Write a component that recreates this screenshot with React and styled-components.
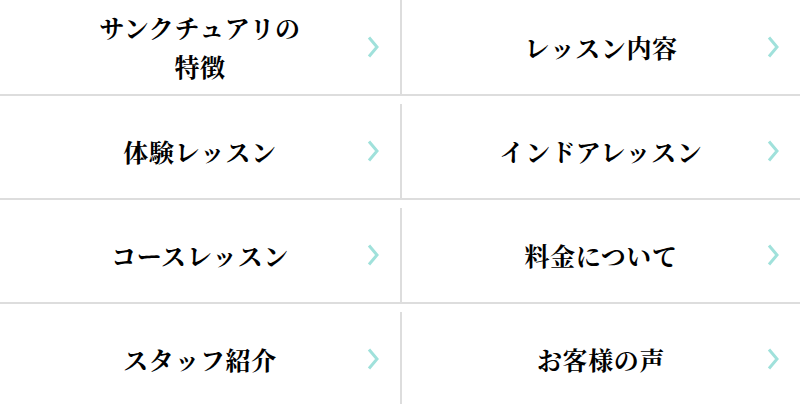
import React from "react";
import styled, { createGlobalStyle } from "styled-components";

const Global = createGlobalStyle`
  html, body { margin: 0; padding: 0; background: #fff; }
  body { overflow: hidden; }
`;

const Menu = styled.nav`
  width: 800px;
  display: flex;
  flex-direction: column;
`;

const Row = styled.div`
  display: grid;
  grid-template-columns: 400px 400px;
  border-bottom: 2px solid #dddddd;
  & + & { padding-top: 8px; }
`;

const Cell = styled.a`
  display: grid;
  grid-template-columns: 1fr auto 1fr;
  align-items: center;
  height: 94px;
  box-sizing: border-box;
  border-left: ${(p) => (p.$right ? "2px solid #dddddd" : "none")};
  text-decoration: none;
  color: #000;
`;

const Label = styled.span`
  grid-column: 2;
  text-align: center;
  font-family: "Noto Serif CJK JP", "Noto Serif JP", "Noto Sans CJK JP", serif;
  font-weight: 700;
  font-size: 25px;
  line-height: 39px;
  letter-spacing: 0.6px;
  color: #000;
`;

const Arrow = styled.svg`
  grid-column: 3;
  justify-self: end;
  margin-right: 21px;
  width: 12px;
  height: 22px;
`;

const Chevron = () => (
  <Arrow viewBox="0 0 12 22">
    <polyline points="2,1.5 10,11 2,20.5" fill="none" stroke="#a0e1db" strokeWidth="3" />
  </Arrow>
);

const rows = [
  [["サンクチュアリの", "特徴"], ["レッスン内容"]],
  [["体験レッスン"], ["インドアレッスン"]],
  [["コースレッスン"], ["料金について"]],
  [["スタッフ紹介"], ["お客様の声"]],
];

export default function App() {
  return (
    <>
      <Global />
      <Menu>
        {rows.map((r, i) => (
          <Row key={i}>
            {r.map((lines, j) => (
              <Cell key={j} href="#" $right={j === 1}>
                <Label>
                  {lines.map((l, k) => (
                    <React.Fragment key={k}>
                      {k > 0 && <br />}
                      {l}
                    </React.Fragment>
                  ))}
                </Label>
                <Chevron />
              </Cell>
            ))}
          </Row>
        ))}
      </Menu>
    </>
  );
}
